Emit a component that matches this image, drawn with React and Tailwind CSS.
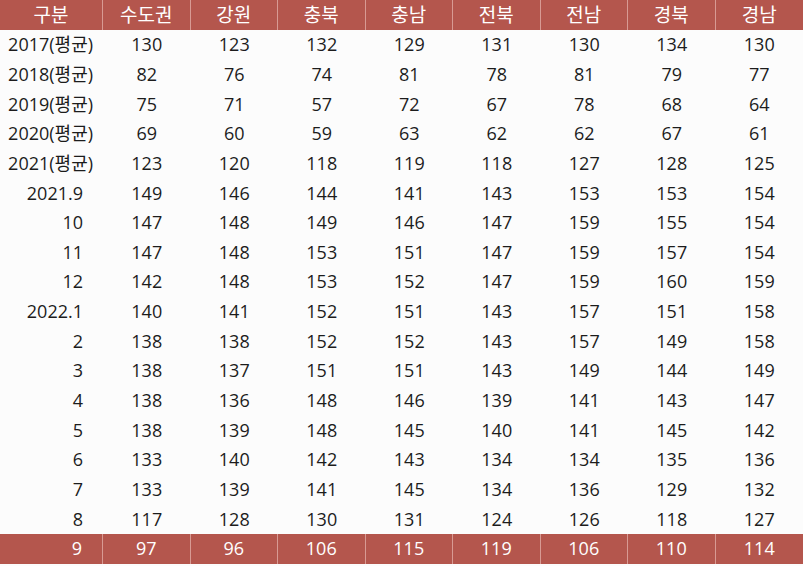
import React from "react";

const regions = ["수도권", "강원", "충북", "충남", "전북", "전남", "경북", "경남"];

const rows = [
  ["2017(평균)", 130, 123, 132, 129, 131, 130, 134, 130],
  ["2018(평균)", 82, 76, 74, 81, 78, 81, 79, 77],
  ["2019(평균)", 75, 71, 57, 72, 67, 78, 68, 64],
  ["2020(평균)", 69, 60, 59, 63, 62, 62, 67, 61],
  ["2021(평균)", 123, 120, 118, 119, 118, 127, 128, 125],
  ["2021.9", 149, 146, 144, 141, 143, 153, 153, 154],
  ["10", 147, 148, 149, 146, 147, 159, 155, 154],
  ["11", 147, 148, 153, 151, 147, 159, 157, 154],
  ["12", 142, 148, 153, 152, 147, 159, 160, 159],
  ["2022.1", 140, 141, 152, 151, 143, 157, 151, 158],
  ["2", 138, 138, 152, 152, 143, 157, 149, 158],
  ["3", 138, 137, 151, 151, 143, 149, 144, 149],
  ["4", 138, 136, 148, 146, 139, 141, 143, 147],
  ["5", 138, 139, 148, 145, 140, 141, 145, 142],
  ["6", 133, 140, 142, 143, 134, 134, 135, 136],
  ["7", 133, 139, 141, 145, 134, 136, 129, 132],
  ["8", 117, 128, 130, 131, 124, 126, 118, 127],
];

const last = ["9", 97, 96, 106, 115, 119, 106, 110, 114];

const cols = "grid grid-cols-[103px_repeat(8,87.5px)]";

function App() {
  return (
    <div
      className="w-[803px] h-[566px] bg-[#fcfcfc] text-[18px] text-[#1c1c1c] whitespace-nowrap"
      style={{ fontFamily: '"Open Sans", "Noto Sans CJK KR", sans-serif' }}
    >
      <div className={`${cols} h-[30px] bg-[#b4564d] text-white text-[19px]`}>
        <div className="flex items-center justify-center border-r border-[#d89a93]">구분</div>
        {regions.map((r, i) => (
          <div
            key={r}
            className={`flex items-center justify-center ${i < 7 ? "border-r border-[#d89a93]" : ""}`}
          >
            {r}
          </div>
        ))}
      </div>

      {rows.map((row) => (
        <div key={row[0]} className={`${cols} h-[29.65px]`}>
          <div
            className={`flex items-center justify-end ${
              String(row[0]).includes("평균") ? "pr-[10px]" : "pr-[20px]"
            }`}
          >
            {row[0]}
          </div>
          {row.slice(1).map((v, i) => (
            <div key={i} className="flex items-center justify-center">
              {v}
            </div>
          ))}
        </div>
      ))}

      <div className={`${cols} h-[30px] bg-[#b4564d] text-white`}>
        <div className="flex items-center justify-end pr-[20px] border-r border-[#d89a93]">{last[0]}</div>
        {last.slice(1).map((v, i) => (
          <div
            key={i}
            className={`flex items-center justify-center ${i < 7 ? "border-r border-[#d89a93]" : ""}`}
          >
            {v}
          </div>
        ))}
      </div>
    </div>
  );
}

export default App;
